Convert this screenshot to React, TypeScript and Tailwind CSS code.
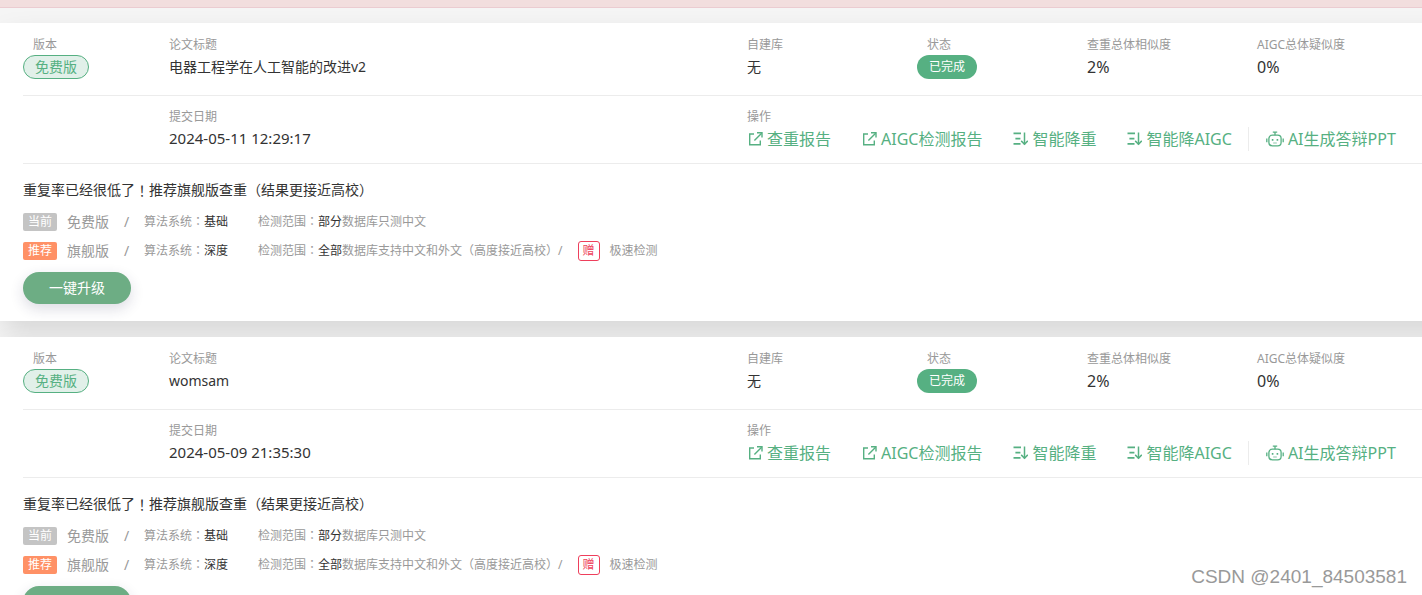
import React from "react";

type Paper = {
  title: string;
  submittedAt: string;
  library: string;
  status: string;
  similarity: string;
  aigc: string;
};

const papers: Paper[] = [
  {
    title: "电器工程学在人工智能的改进v2",
    submittedAt: "2024-05-11 12:29:17",
    library: "无",
    status: "已完成",
    similarity: "2%",
    aigc: "0%",
  },
  {
    title: "womsam",
    submittedAt: "2024-05-09 21:35:30",
    library: "无",
    status: "已完成",
    similarity: "2%",
    aigc: "0%",
  },
];

function ExternalIcon() {
  return (
    <svg viewBox="0 0 16 16" className="h-4 w-4 shrink-0" fill="none" stroke="currentColor" strokeWidth="1.4" aria-hidden="true">
      <path d="M7 3H2.7v10.8h10.6V9.6" />
      <path d="M10 1.8h5v4.7" />
      <path d="M14.6 2.2 7.4 9.6" />
    </svg>
  );
}

function ReduceIcon() {
  return (
    <svg viewBox="0 0 16 16" className="h-4 w-4 shrink-0" fill="none" stroke="currentColor" strokeWidth="1.8" aria-hidden="true">
      <path d="M1.5 2.4h7.5M3.4 7.6h5M1.5 12.9h7" />
      <path d="M12.5 1.5v12" strokeWidth="1.5" />
      <path d="M9.2 9.9l3.3 3.3 3.3-3.3" strokeWidth="1.5" />
    </svg>
  );
}

function RobotIcon() {
  return (
    <svg viewBox="0 0 18 16" className="h-4 w-[18px] shrink-0" fill="none" stroke="currentColor" strokeWidth="1.3" aria-hidden="true">
      <rect x="2.9" y="4.2" width="12.2" height="10.6" rx="3.4" />
      <path d="M9 4.2V1.4M6.8 1.2h4.4" />
      <path d="M.8 7.6v3.6M17.2 7.6v3.6" />
      <path d="M6.6 8v1.8M11.4 8v1.8" strokeWidth="1.6" />
      <path d="M7.2 12h3.6" strokeWidth="0.7" />
    </svg>
  );
}

/* Full-width marks that sit in the middle of their box. */
function Mark({ children }: { children: string }) {
  return <span className="font-['Noto_Sans_CJK_TC',sans-serif]">{children}</span>;
}

function Field({ label, indent, children }: { label: string; indent?: boolean; children: React.ReactNode }) {
  return (
    <div className="min-w-0 whitespace-nowrap">
      <dt className={indent ? "pl-2.5 text-xs leading-5 text-[#999]" : "text-xs leading-5 text-[#999]"}>{label}</dt>
      <dd className="flex h-6 items-center text-sm text-[#333]">{children}</dd>
    </div>
  );
}

function ActionLink({ icon, children }: { icon: React.ReactNode; children: React.ReactNode }) {
  return (
    <a href="#" className="flex items-center gap-1 text-[#56b082]">
      {icon}
      {children}
    </a>
  );
}

function Plan({
  tag,
  tagClass,
  name,
  system,
  scope,
  detail,
  gift,
}: {
  tag: string;
  tagClass: string;
  name: string;
  system: string;
  scope: string;
  detail: string;
  gift?: string;
}) {
  return (
    <li className="flex h-[29px] items-center text-xs whitespace-nowrap text-[#999]">
      <span className={tagClass}>{tag}</span>
      <span className="ml-2.5 text-sm leading-4">{name}</span>
      <span className="w-[35px] text-center text-sm leading-4">/</span>
      <span>
        算法系统<Mark>：</Mark>
        <span className="text-[#333]">{system}</span>
      </span>
      <span className="ml-[30px]">
        检测范围<Mark>：</Mark>
        <span className="text-[#333]">{scope}</span>
        {detail}
      </span>
      {gift && (
        <>
          <span className="ml-[15px] flex h-5 w-[22px] items-center justify-center rounded-[3px] border border-[#ee3f5c] text-[#ee3f5c]">
            赠
          </span>
          <span className="ml-2.5">{gift}</span>
        </>
      )}
    </li>
  );
}

function PaperCard({ paper }: { paper: Paper }) {
  return (
    <article className="-mr-10 bg-white pr-10 pl-[23px] shadow-[0_12px_28px_-4px_rgba(0,0,0,0.15)]">
      <dl className="grid grid-cols-[146px_1fr_170px_170px_170px_165px] border-b border-[#ececec] pt-3 pb-4">
        <Field label="版本" indent>
          <span className="flex h-6 w-[66px] items-center justify-center rounded-full border border-[#56b082] bg-[#e1f0e9] text-[#56b082]">
            免费版
          </span>
        </Field>
        <Field label="论文标题">{paper.title}</Field>
        <Field label="自建库">{paper.library}</Field>
        <Field label="状态" indent>
          <span className="flex h-6 w-[60px] items-center justify-center rounded-full bg-[#56b082] text-xs text-white">
            {paper.status}
          </span>
        </Field>
        <Field label="查重总体相似度">
          <span className="text-base">{paper.similarity}</span>
        </Field>
        <Field label="AIGC总体疑似度">
          <span className="text-base">{paper.aigc}</span>
        </Field>
      </dl>

      <dl className="grid grid-cols-[146px_1fr_675px] border-b border-[#ececec] pt-[11px] pb-3">
        <div className="col-start-2">
          <Field label="提交日期">
            <span className="text-[15px]">{paper.submittedAt}</span>
          </Field>
        </div>
        <Field label="操作">
          <div className="flex items-center gap-[30px] text-base leading-6">
            <ActionLink icon={<ExternalIcon />}>查重报告</ActionLink>
            <ActionLink icon={<ExternalIcon />}>AIGC检测报告</ActionLink>
            <ActionLink icon={<ReduceIcon />}>智能降重</ActionLink>
            <div className="flex items-center">
              <ActionLink icon={<ReduceIcon />}>智能降AIGC</ActionLink>
              <span className="mr-[17px] ml-4 h-6 w-px bg-[#ececec]" />
              <ActionLink icon={<RobotIcon />}>AI生成答辩PPT</ActionLink>
            </div>
          </div>
        </Field>
      </dl>

      <section className="pt-4 pb-[17px]">
        <h2 className="flex h-5 items-center text-sm leading-4 text-[#333]">
          重复率已经很低了<Mark>！</Mark>推荐旗舰版查重（结果更接近高校）
        </h2>
        <ul className="mt-[7px]">
          <Plan
            tag="当前"
            tagClass="flex h-[18px] w-[34px] items-center justify-center rounded-[2px] bg-[#c4c4c4] text-white"
            name="免费版"
            system="基础"
            scope="部分"
            detail="数据库只测中文"
          />
          <Plan
            tag="推荐"
            tagClass="flex h-[18px] w-[34px] items-center justify-center rounded-[2px] bg-[#ff9166] text-white"
            name="旗舰版"
            system="深度"
            scope="全部"
            detail="数据库支持中文和外文（高度接近高校）/"
            gift="极速检测"
          />
        </ul>
        <button
          type="button"
          className="mt-[7px] block h-8 w-[108px] rounded-full bg-[#6dad84] text-sm leading-none text-white shadow-[0_5px_14px_rgba(40,40,80,0.16)]"
        >
          一键升级
        </button>
      </section>
    </article>
  );
}

export default function App() {
  return (
    <div className="relative h-screen overflow-hidden bg-[#f5f5f5] font-['Noto_Sans','Noto_Sans_CJK_SC',sans-serif]">
      <div className="relative z-10 h-2 border-b border-[#ebccd1] bg-[#f2dede]" />
      <main className="mt-[15px] flex flex-col gap-4">
        {papers.map((paper) => (
          <PaperCard key={paper.submittedAt} paper={paper} />
        ))}
      </main>
      <p className="absolute right-[15px] bottom-1 z-20 font-['Liberation_Sans',Arial,sans-serif] text-[19px] text-[#999]">
        CSDN @2401_84503581
      </p>
    </div>
  );
}
